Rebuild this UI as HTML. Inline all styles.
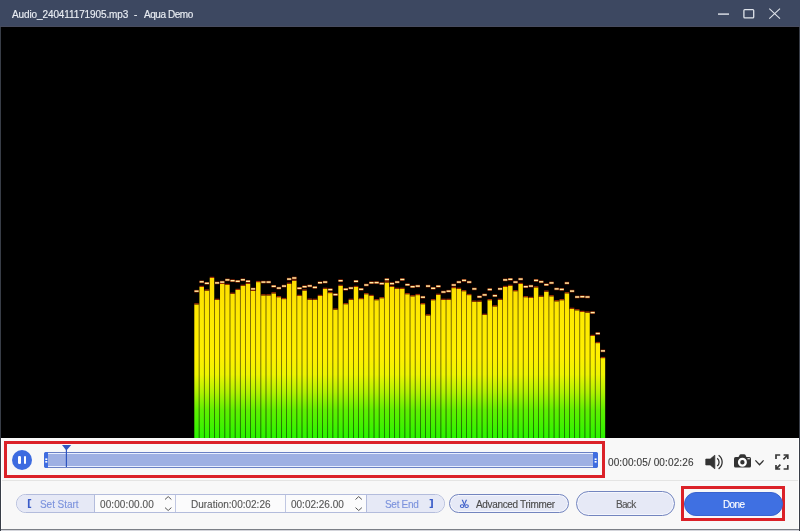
<!DOCTYPE html>
<html><head><meta charset="utf-8">
<style>
*{box-sizing:border-box;margin:0;padding:0}
html,body{width:800px;height:531px;overflow:hidden;background:#f8f8f8;font-family:"Liberation Sans",sans-serif}
.abs{position:absolute}
#title{left:0;top:0;width:800px;height:27px;background:#3d4861;border-bottom:1px solid #484c5f}
.ttl{top:8px;font-size:10px;color:#e9edf3;white-space:pre;line-height:14px;will-change:transform;-webkit-text-stroke:0.15px currentColor}
#video{left:1px;top:27px;width:798px;height:411px;background:#000}
#panel{left:1px;top:438px;width:798px;height:91px;background:#f8f8f8;border-left:1px solid #fff;border-right:1px solid #fff}
#lb{left:0;top:27px;width:1px;height:504px;background:#383d47}
#rb{left:799px;top:27px;width:1px;height:504px;background:#383d47}
#bb1{left:1px;top:529px;width:798px;height:1px;background:#7b7f86}
#bb2{left:1px;top:530px;width:798px;height:1px;background:#d4d5db}
#sep{left:2px;top:480px;width:796px;height:1px;background:#e4e4e3}
#redbox{left:4px;top:441px;width:601px;height:37px;border:3px solid #db2128}
#pause{left:12px;top:450px;width:20px;height:20px;border-radius:50%;background:#3d6be0}
#pause i{position:absolute;top:6px;width:2.6px;height:8px;background:#fff;border-radius:1.3px}
#track{left:43.5px;top:452px;width:554px;height:16px;border-radius:2px;background:#9fb0e3;border:1px solid #6a80c4;box-shadow:inset 0 0 0 1px #e8eeff}
.handle{top:452px;width:4.5px;height:16px;background:#3f6ce0}
.txt{font-size:10px;white-space:pre;line-height:12px;will-change:transform;-webkit-text-stroke:0.12px currentColor}
#time{left:608px;top:456.5px;color:#3c3c3c}
.btn{border-radius:12px}
</style></head><body>
<div id="title" class="abs"></div>
<div class="abs ttl" style="left:12px;letter-spacing:-0.11px">Audio_240411171905.mp3</div>
<div class="abs ttl" style="left:134px">-</div>
<div class="abs ttl" style="left:144.4px;letter-spacing:-0.45px">Aqua Demo</div>
<svg class="abs" style="left:0;top:0" width="800" height="27">
  <rect x="718" y="13.4" width="11" height="1.4" fill="#dfe3ea"/>
  <rect x="743.9" y="9.6" width="9.8" height="8.2" rx="0.9" fill="none" stroke="#dfe3ea" stroke-width="1.3"/>
  <path d="M769.3 8.6 L780 18.7 M780 8.6 L769.3 18.7" stroke="#dfe3ea" stroke-width="1.1" fill="none"/>
</svg>
<div id="video" class="abs"></div>
<svg class="abs" style="left:0;top:0" width="800" height="531">
  <defs>
    <linearGradient id="g" x1="0" y1="275" x2="0" y2="438" gradientUnits="userSpaceOnUse">
      <stop offset="0" stop-color="#ffdc00"/>
      <stop offset="0.25" stop-color="#ffea00"/>
      <stop offset="0.5" stop-color="#fff000"/>
      <stop offset="0.61" stop-color="#eef400"/>
      <stop offset="0.72" stop-color="#b0f200"/>
      <stop offset="0.83" stop-color="#5ef000"/>
      <stop offset="1" stop-color="#2af400"/>
    </linearGradient>
    <linearGradient id="gs" x1="0" y1="275" x2="0" y2="438" gradientUnits="userSpaceOnUse">
      <stop offset="0" stop-color="#704000"/>
      <stop offset="0.52" stop-color="#706000"/>
      <stop offset="0.7" stop-color="#507000"/>
      <stop offset="1" stop-color="#106800"/>
    </linearGradient>
  </defs>
  <g fill="url(#gs)">
<rect x="198.80" y="304.4" width="0.644" height="133.6"/>
<rect x="203.94" y="290.6" width="0.644" height="147.4"/>
<rect x="209.09" y="290.6" width="0.644" height="147.4"/>
<rect x="214.23" y="299.9" width="0.644" height="138.1"/>
<rect x="219.38" y="299.9" width="0.644" height="138.1"/>
<rect x="224.52" y="285.0" width="0.644" height="153.0"/>
<rect x="229.66" y="293.8" width="0.644" height="144.2"/>
<rect x="234.81" y="293.8" width="0.644" height="144.2"/>
<rect x="239.95" y="290.0" width="0.644" height="148.0"/>
<rect x="245.10" y="285.9" width="0.644" height="152.1"/>
<rect x="250.24" y="290.8" width="0.644" height="147.2"/>
<rect x="255.38" y="290.8" width="0.644" height="147.2"/>
<rect x="260.53" y="295.4" width="0.644" height="142.6"/>
<rect x="265.67" y="295.4" width="0.644" height="142.6"/>
<rect x="270.82" y="295.4" width="0.644" height="142.6"/>
<rect x="275.96" y="297.2" width="0.644" height="140.8"/>
<rect x="281.10" y="299.1" width="0.644" height="138.9"/>
<rect x="286.25" y="299.1" width="0.644" height="138.9"/>
<rect x="291.39" y="283.8" width="0.644" height="154.2"/>
<rect x="296.54" y="296.0" width="0.644" height="142.0"/>
<rect x="301.68" y="296.0" width="0.644" height="142.0"/>
<rect x="306.82" y="299.7" width="0.644" height="138.3"/>
<rect x="311.97" y="299.9" width="0.644" height="138.1"/>
<rect x="317.11" y="299.9" width="0.644" height="138.1"/>
<rect x="322.26" y="296.0" width="0.644" height="142.0"/>
<rect x="327.40" y="293.1" width="0.644" height="144.9"/>
<rect x="332.54" y="309.6" width="0.644" height="128.4"/>
<rect x="337.69" y="309.6" width="0.644" height="128.4"/>
<rect x="342.83" y="304.2" width="0.644" height="133.8"/>
<rect x="347.98" y="304.2" width="0.644" height="133.8"/>
<rect x="353.12" y="299.9" width="0.644" height="138.1"/>
<rect x="358.26" y="299.1" width="0.644" height="138.9"/>
<rect x="363.41" y="299.1" width="0.644" height="138.9"/>
<rect x="368.55" y="296.0" width="0.644" height="142.0"/>
<rect x="373.70" y="300.2" width="0.644" height="137.8"/>
<rect x="378.84" y="300.2" width="0.644" height="137.8"/>
<rect x="383.98" y="298.2" width="0.644" height="139.8"/>
<rect x="389.13" y="287.0" width="0.644" height="151.0"/>
<rect x="394.27" y="288.9" width="0.644" height="149.1"/>
<rect x="399.42" y="288.9" width="0.644" height="149.1"/>
<rect x="404.56" y="294.2" width="0.644" height="143.8"/>
<rect x="409.70" y="296.3" width="0.644" height="141.7"/>
<rect x="414.85" y="296.3" width="0.644" height="141.7"/>
<rect x="419.99" y="304.2" width="0.644" height="133.8"/>
<rect x="425.14" y="315.4" width="0.644" height="122.6"/>
<rect x="430.28" y="315.4" width="0.644" height="122.6"/>
<rect x="435.42" y="300.2" width="0.644" height="137.8"/>
<rect x="440.57" y="299.9" width="0.644" height="138.1"/>
<rect x="445.71" y="299.9" width="0.644" height="138.1"/>
<rect x="450.86" y="299.9" width="0.644" height="138.1"/>
<rect x="456.00" y="288.9" width="0.644" height="149.1"/>
<rect x="461.14" y="291.2" width="0.644" height="146.8"/>
<rect x="466.29" y="295.1" width="0.644" height="142.9"/>
<rect x="471.43" y="301.7" width="0.644" height="136.3"/>
<rect x="476.58" y="301.7" width="0.644" height="136.3"/>
<rect x="481.72" y="314.9" width="0.644" height="123.1"/>
<rect x="486.86" y="314.9" width="0.644" height="123.1"/>
<rect x="492.01" y="306.4" width="0.644" height="131.6"/>
<rect x="497.15" y="306.4" width="0.644" height="131.6"/>
<rect x="502.30" y="299.9" width="0.644" height="138.1"/>
<rect x="507.44" y="287.0" width="0.644" height="151.0"/>
<rect x="512.58" y="291.2" width="0.644" height="146.8"/>
<rect x="517.73" y="291.2" width="0.644" height="146.8"/>
<rect x="522.87" y="297.2" width="0.644" height="140.8"/>
<rect x="528.02" y="298.0" width="0.644" height="140.0"/>
<rect x="533.16" y="298.0" width="0.644" height="140.0"/>
<rect x="538.30" y="296.8" width="0.644" height="141.2"/>
<rect x="543.45" y="296.8" width="0.644" height="141.2"/>
<rect x="548.59" y="296.3" width="0.644" height="141.7"/>
<rect x="553.74" y="301.3" width="0.644" height="136.7"/>
<rect x="558.88" y="301.3" width="0.644" height="136.7"/>
<rect x="564.02" y="300.2" width="0.644" height="137.8"/>
<rect x="569.17" y="308.9" width="0.644" height="129.1"/>
<rect x="574.31" y="310.3" width="0.644" height="127.7"/>
<rect x="579.46" y="312.0" width="0.644" height="126.0"/>
<rect x="584.60" y="312.6" width="0.644" height="125.4"/>
<rect x="589.74" y="336.0" width="0.644" height="102.0"/>
<rect x="594.89" y="343.1" width="0.644" height="94.9"/>
<rect x="600.03" y="358.1" width="0.644" height="79.9"/>
  </g>
  <g fill="url(#g)">
<rect x="194.30" y="304.4" width="4.5" height="133.6"/><rect x="194.30" y="303.2" width="4.5" height="1.2" fill="#a03000"/>
<rect x="199.44" y="287.0" width="4.5" height="151.0"/><rect x="199.44" y="285.8" width="4.5" height="1.2" fill="#a03000"/>
<rect x="204.59" y="290.6" width="4.5" height="147.4"/><rect x="204.59" y="289.4" width="4.5" height="1.2" fill="#a03000"/>
<rect x="209.73" y="278.0" width="4.5" height="160.0"/><rect x="209.73" y="276.8" width="4.5" height="1.2" fill="#a03000"/>
<rect x="214.88" y="299.9" width="4.5" height="138.1"/><rect x="214.88" y="298.7" width="4.5" height="1.2" fill="#a03000"/>
<rect x="220.02" y="284.0" width="4.5" height="154.0"/><rect x="220.02" y="282.8" width="4.5" height="1.2" fill="#a03000"/>
<rect x="225.16" y="285.0" width="4.5" height="153.0"/><rect x="225.16" y="283.8" width="4.5" height="1.2" fill="#a03000"/>
<rect x="230.31" y="293.8" width="4.5" height="144.2"/><rect x="230.31" y="292.6" width="4.5" height="1.2" fill="#a03000"/>
<rect x="235.45" y="290.0" width="4.5" height="148.0"/><rect x="235.45" y="288.8" width="4.5" height="1.2" fill="#a03000"/>
<rect x="240.60" y="285.9" width="4.5" height="152.1"/><rect x="240.60" y="284.7" width="4.5" height="1.2" fill="#a03000"/>
<rect x="245.74" y="284.0" width="4.5" height="154.0"/><rect x="245.74" y="282.8" width="4.5" height="1.2" fill="#a03000"/>
<rect x="250.88" y="290.8" width="4.5" height="147.2"/><rect x="250.88" y="289.6" width="4.5" height="1.2" fill="#a03000"/>
<rect x="256.03" y="282.1" width="4.5" height="155.9"/><rect x="256.03" y="280.9" width="4.5" height="1.2" fill="#a03000"/>
<rect x="261.17" y="295.4" width="4.5" height="142.6"/><rect x="261.17" y="294.2" width="4.5" height="1.2" fill="#a03000"/>
<rect x="266.32" y="295.4" width="4.5" height="142.6"/><rect x="266.32" y="294.2" width="4.5" height="1.2" fill="#a03000"/>
<rect x="271.46" y="293.4" width="4.5" height="144.6"/><rect x="271.46" y="292.2" width="4.5" height="1.2" fill="#a03000"/>
<rect x="276.60" y="297.2" width="4.5" height="140.8"/><rect x="276.60" y="296.0" width="4.5" height="1.2" fill="#a03000"/>
<rect x="281.75" y="299.1" width="4.5" height="138.9"/><rect x="281.75" y="297.9" width="4.5" height="1.2" fill="#a03000"/>
<rect x="286.89" y="283.8" width="4.5" height="154.2"/><rect x="286.89" y="282.6" width="4.5" height="1.2" fill="#a03000"/>
<rect x="292.04" y="280.7" width="4.5" height="157.3"/><rect x="292.04" y="279.5" width="4.5" height="1.2" fill="#a03000"/>
<rect x="297.18" y="296.0" width="4.5" height="142.0"/><rect x="297.18" y="294.8" width="4.5" height="1.2" fill="#a03000"/>
<rect x="302.32" y="290.6" width="4.5" height="147.4"/><rect x="302.32" y="289.4" width="4.5" height="1.2" fill="#a03000"/>
<rect x="307.47" y="299.7" width="4.5" height="138.3"/><rect x="307.47" y="298.5" width="4.5" height="1.2" fill="#a03000"/>
<rect x="312.61" y="299.9" width="4.5" height="138.1"/><rect x="312.61" y="298.7" width="4.5" height="1.2" fill="#a03000"/>
<rect x="317.76" y="296.0" width="4.5" height="142.0"/><rect x="317.76" y="294.8" width="4.5" height="1.2" fill="#a03000"/>
<rect x="322.90" y="288.9" width="4.5" height="149.1"/><rect x="322.90" y="287.7" width="4.5" height="1.2" fill="#a03000"/>
<rect x="328.04" y="293.1" width="4.5" height="144.9"/><rect x="328.04" y="291.9" width="4.5" height="1.2" fill="#a03000"/>
<rect x="333.19" y="309.6" width="4.5" height="128.4"/><rect x="333.19" y="308.4" width="4.5" height="1.2" fill="#a03000"/>
<rect x="338.33" y="285.9" width="4.5" height="152.1"/><rect x="338.33" y="284.7" width="4.5" height="1.2" fill="#a03000"/>
<rect x="343.48" y="304.2" width="4.5" height="133.8"/><rect x="343.48" y="303.0" width="4.5" height="1.2" fill="#a03000"/>
<rect x="348.62" y="299.9" width="4.5" height="138.1"/><rect x="348.62" y="298.7" width="4.5" height="1.2" fill="#a03000"/>
<rect x="353.76" y="287.0" width="4.5" height="151.0"/><rect x="353.76" y="285.8" width="4.5" height="1.2" fill="#a03000"/>
<rect x="358.91" y="299.1" width="4.5" height="138.9"/><rect x="358.91" y="297.9" width="4.5" height="1.2" fill="#a03000"/>
<rect x="364.05" y="294.2" width="4.5" height="143.8"/><rect x="364.05" y="293.0" width="4.5" height="1.2" fill="#a03000"/>
<rect x="369.20" y="296.0" width="4.5" height="142.0"/><rect x="369.20" y="294.8" width="4.5" height="1.2" fill="#a03000"/>
<rect x="374.34" y="300.2" width="4.5" height="137.8"/><rect x="374.34" y="299.0" width="4.5" height="1.2" fill="#a03000"/>
<rect x="379.48" y="298.2" width="4.5" height="139.8"/><rect x="379.48" y="297.0" width="4.5" height="1.2" fill="#a03000"/>
<rect x="384.63" y="282.5" width="4.5" height="155.5"/><rect x="384.63" y="281.3" width="4.5" height="1.2" fill="#a03000"/>
<rect x="389.77" y="287.0" width="4.5" height="151.0"/><rect x="389.77" y="285.8" width="4.5" height="1.2" fill="#a03000"/>
<rect x="394.92" y="288.9" width="4.5" height="149.1"/><rect x="394.92" y="287.7" width="4.5" height="1.2" fill="#a03000"/>
<rect x="400.06" y="288.9" width="4.5" height="149.1"/><rect x="400.06" y="287.7" width="4.5" height="1.2" fill="#a03000"/>
<rect x="405.20" y="294.2" width="4.5" height="143.8"/><rect x="405.20" y="293.0" width="4.5" height="1.2" fill="#a03000"/>
<rect x="410.35" y="296.3" width="4.5" height="141.7"/><rect x="410.35" y="295.1" width="4.5" height="1.2" fill="#a03000"/>
<rect x="415.49" y="295.1" width="4.5" height="142.9"/><rect x="415.49" y="293.9" width="4.5" height="1.2" fill="#a03000"/>
<rect x="420.64" y="304.2" width="4.5" height="133.8"/><rect x="420.64" y="303.0" width="4.5" height="1.2" fill="#a03000"/>
<rect x="425.78" y="315.4" width="4.5" height="122.6"/><rect x="425.78" y="314.2" width="4.5" height="1.2" fill="#a03000"/>
<rect x="430.92" y="300.2" width="4.5" height="137.8"/><rect x="430.92" y="299.0" width="4.5" height="1.2" fill="#a03000"/>
<rect x="436.07" y="294.9" width="4.5" height="143.1"/><rect x="436.07" y="293.7" width="4.5" height="1.2" fill="#a03000"/>
<rect x="441.21" y="299.9" width="4.5" height="138.1"/><rect x="441.21" y="298.7" width="4.5" height="1.2" fill="#a03000"/>
<rect x="446.36" y="299.9" width="4.5" height="138.1"/><rect x="446.36" y="298.7" width="4.5" height="1.2" fill="#a03000"/>
<rect x="451.50" y="288.1" width="4.5" height="149.9"/><rect x="451.50" y="286.9" width="4.5" height="1.2" fill="#a03000"/>
<rect x="456.64" y="288.9" width="4.5" height="149.1"/><rect x="456.64" y="287.7" width="4.5" height="1.2" fill="#a03000"/>
<rect x="461.79" y="291.2" width="4.5" height="146.8"/><rect x="461.79" y="290.0" width="4.5" height="1.2" fill="#a03000"/>
<rect x="466.93" y="295.1" width="4.5" height="142.9"/><rect x="466.93" y="293.9" width="4.5" height="1.2" fill="#a03000"/>
<rect x="472.08" y="301.7" width="4.5" height="136.3"/><rect x="472.08" y="300.5" width="4.5" height="1.2" fill="#a03000"/>
<rect x="477.22" y="301.7" width="4.5" height="136.3"/><rect x="477.22" y="300.5" width="4.5" height="1.2" fill="#a03000"/>
<rect x="482.36" y="314.9" width="4.5" height="123.1"/><rect x="482.36" y="313.7" width="4.5" height="1.2" fill="#a03000"/>
<rect x="487.51" y="300.2" width="4.5" height="137.8"/><rect x="487.51" y="299.0" width="4.5" height="1.2" fill="#a03000"/>
<rect x="492.65" y="306.4" width="4.5" height="131.6"/><rect x="492.65" y="305.2" width="4.5" height="1.2" fill="#a03000"/>
<rect x="497.80" y="299.9" width="4.5" height="138.1"/><rect x="497.80" y="298.7" width="4.5" height="1.2" fill="#a03000"/>
<rect x="502.94" y="287.0" width="4.5" height="151.0"/><rect x="502.94" y="285.8" width="4.5" height="1.2" fill="#a03000"/>
<rect x="508.08" y="285.9" width="4.5" height="152.1"/><rect x="508.08" y="284.7" width="4.5" height="1.2" fill="#a03000"/>
<rect x="513.23" y="291.2" width="4.5" height="146.8"/><rect x="513.23" y="290.0" width="4.5" height="1.2" fill="#a03000"/>
<rect x="518.37" y="284.0" width="4.5" height="154.0"/><rect x="518.37" y="282.8" width="4.5" height="1.2" fill="#a03000"/>
<rect x="523.52" y="297.2" width="4.5" height="140.8"/><rect x="523.52" y="296.0" width="4.5" height="1.2" fill="#a03000"/>
<rect x="528.66" y="298.0" width="4.5" height="140.0"/><rect x="528.66" y="296.8" width="4.5" height="1.2" fill="#a03000"/>
<rect x="533.80" y="287.4" width="4.5" height="150.6"/><rect x="533.80" y="286.2" width="4.5" height="1.2" fill="#a03000"/>
<rect x="538.95" y="296.8" width="4.5" height="141.2"/><rect x="538.95" y="295.6" width="4.5" height="1.2" fill="#a03000"/>
<rect x="544.09" y="291.7" width="4.5" height="146.3"/><rect x="544.09" y="290.5" width="4.5" height="1.2" fill="#a03000"/>
<rect x="549.24" y="296.3" width="4.5" height="141.7"/><rect x="549.24" y="295.1" width="4.5" height="1.2" fill="#a03000"/>
<rect x="554.38" y="301.3" width="4.5" height="136.7"/><rect x="554.38" y="300.1" width="4.5" height="1.2" fill="#a03000"/>
<rect x="559.52" y="300.2" width="4.5" height="137.8"/><rect x="559.52" y="299.0" width="4.5" height="1.2" fill="#a03000"/>
<rect x="564.67" y="293.3" width="4.5" height="144.7"/><rect x="564.67" y="292.1" width="4.5" height="1.2" fill="#a03000"/>
<rect x="569.81" y="308.9" width="4.5" height="129.1"/><rect x="569.81" y="307.7" width="4.5" height="1.2" fill="#a03000"/>
<rect x="574.96" y="310.3" width="4.5" height="127.7"/><rect x="574.96" y="309.1" width="4.5" height="1.2" fill="#a03000"/>
<rect x="580.10" y="312.0" width="4.5" height="126.0"/><rect x="580.10" y="310.8" width="4.5" height="1.2" fill="#a03000"/>
<rect x="585.24" y="312.6" width="4.5" height="125.4"/><rect x="585.24" y="311.4" width="4.5" height="1.2" fill="#a03000"/>
<rect x="590.39" y="336.0" width="4.5" height="102.0"/><rect x="590.39" y="334.8" width="4.5" height="1.2" fill="#a03000"/>
<rect x="595.53" y="343.1" width="4.5" height="94.9"/><rect x="595.53" y="341.9" width="4.5" height="1.2" fill="#a03000"/>
<rect x="600.68" y="358.1" width="4.5" height="79.9"/><rect x="600.68" y="356.9" width="4.5" height="1.2" fill="#a03000"/>
  </g>
  <g>
<rect x="194.30" y="289.9" width="4.5" height="2.6" fill="#962800"/><rect x="194.50" y="290.5" width="4.10" height="1.4" fill="#fff0a8"/>
<rect x="199.44" y="280.5" width="4.5" height="2.6" fill="#962800"/><rect x="199.64" y="281.1" width="4.10" height="1.4" fill="#fff0a8"/>
<rect x="204.59" y="282.0" width="4.5" height="2.6" fill="#962800"/><rect x="204.79" y="282.6" width="4.10" height="1.4" fill="#fff0a8"/>
<rect x="214.88" y="281.6" width="4.5" height="2.6" fill="#962800"/><rect x="215.08" y="282.2" width="4.10" height="1.4" fill="#fff0a8"/>
<rect x="220.02" y="280.8" width="4.5" height="2.6" fill="#962800"/><rect x="220.22" y="281.4" width="4.10" height="1.4" fill="#fff0a8"/>
<rect x="225.16" y="278.6" width="4.5" height="2.6" fill="#962800"/><rect x="225.36" y="279.2" width="4.10" height="1.4" fill="#fff0a8"/>
<rect x="230.31" y="279.4" width="4.5" height="2.6" fill="#962800"/><rect x="230.51" y="280.0" width="4.10" height="1.4" fill="#fff0a8"/>
<rect x="235.45" y="280.0" width="4.5" height="2.6" fill="#962800"/><rect x="235.65" y="280.6" width="4.10" height="1.4" fill="#fff0a8"/>
<rect x="240.60" y="278.5" width="4.5" height="2.6" fill="#962800"/><rect x="240.80" y="279.1" width="4.10" height="1.4" fill="#fff0a8"/>
<rect x="245.74" y="280.0" width="4.5" height="2.6" fill="#962800"/><rect x="245.94" y="280.6" width="4.10" height="1.4" fill="#fff0a8"/>
<rect x="250.88" y="287.6" width="4.5" height="2.6" fill="#962800"/><rect x="251.08" y="288.2" width="4.10" height="1.4" fill="#fff0a8"/>
<rect x="261.17" y="280.8" width="4.5" height="2.6" fill="#962800"/><rect x="261.37" y="281.4" width="4.10" height="1.4" fill="#fff0a8"/>
<rect x="266.32" y="280.8" width="4.5" height="2.6" fill="#962800"/><rect x="266.52" y="281.4" width="4.10" height="1.4" fill="#fff0a8"/>
<rect x="271.46" y="285.0" width="4.5" height="2.6" fill="#962800"/><rect x="271.66" y="285.6" width="4.10" height="1.4" fill="#fff0a8"/>
<rect x="276.60" y="286.8" width="4.5" height="2.6" fill="#962800"/><rect x="276.80" y="287.4" width="4.10" height="1.4" fill="#fff0a8"/>
<rect x="281.75" y="284.8" width="4.5" height="2.6" fill="#962800"/><rect x="281.95" y="285.4" width="4.10" height="1.4" fill="#fff0a8"/>
<rect x="286.89" y="277.8" width="4.5" height="2.6" fill="#962800"/><rect x="287.09" y="278.4" width="4.10" height="1.4" fill="#fff0a8"/>
<rect x="292.04" y="276.7" width="4.5" height="2.6" fill="#962800"/><rect x="292.24" y="277.3" width="4.10" height="1.4" fill="#fff0a8"/>
<rect x="297.18" y="287.0" width="4.5" height="2.6" fill="#962800"/><rect x="297.38" y="287.6" width="4.10" height="1.4" fill="#fff0a8"/>
<rect x="302.32" y="285.4" width="4.5" height="2.6" fill="#962800"/><rect x="302.52" y="286.0" width="4.10" height="1.4" fill="#fff0a8"/>
<rect x="307.47" y="284.6" width="4.5" height="2.6" fill="#962800"/><rect x="307.67" y="285.2" width="4.10" height="1.4" fill="#fff0a8"/>
<rect x="312.61" y="286.1" width="4.5" height="2.6" fill="#962800"/><rect x="312.81" y="286.7" width="4.10" height="1.4" fill="#fff0a8"/>
<rect x="317.76" y="281.4" width="4.5" height="2.6" fill="#962800"/><rect x="317.96" y="282.0" width="4.10" height="1.4" fill="#fff0a8"/>
<rect x="322.90" y="280.8" width="4.5" height="2.6" fill="#962800"/><rect x="323.10" y="281.4" width="4.10" height="1.4" fill="#fff0a8"/>
<rect x="328.04" y="288.3" width="4.5" height="2.6" fill="#962800"/><rect x="328.24" y="288.9" width="4.10" height="1.4" fill="#fff0a8"/>
<rect x="333.19" y="293.3" width="4.5" height="2.6" fill="#962800"/><rect x="333.39" y="293.9" width="4.10" height="1.4" fill="#fff0a8"/>
<rect x="338.33" y="279.4" width="4.5" height="2.6" fill="#962800"/><rect x="338.53" y="280.0" width="4.10" height="1.4" fill="#fff0a8"/>
<rect x="343.48" y="288.0" width="4.5" height="2.6" fill="#962800"/><rect x="343.68" y="288.6" width="4.10" height="1.4" fill="#fff0a8"/>
<rect x="348.62" y="286.8" width="4.5" height="2.6" fill="#962800"/><rect x="348.82" y="287.4" width="4.10" height="1.4" fill="#fff0a8"/>
<rect x="353.76" y="280.0" width="4.5" height="2.6" fill="#962800"/><rect x="353.96" y="280.6" width="4.10" height="1.4" fill="#fff0a8"/>
<rect x="358.91" y="288.0" width="4.5" height="2.6" fill="#962800"/><rect x="359.11" y="288.6" width="4.10" height="1.4" fill="#fff0a8"/>
<rect x="364.05" y="283.7" width="4.5" height="2.6" fill="#962800"/><rect x="364.25" y="284.3" width="4.10" height="1.4" fill="#fff0a8"/>
<rect x="369.20" y="281.4" width="4.5" height="2.6" fill="#962800"/><rect x="369.40" y="282.0" width="4.10" height="1.4" fill="#fff0a8"/>
<rect x="374.34" y="281.3" width="4.5" height="2.6" fill="#962800"/><rect x="374.54" y="281.9" width="4.10" height="1.4" fill="#fff0a8"/>
<rect x="379.48" y="282.3" width="4.5" height="2.6" fill="#962800"/><rect x="379.68" y="282.9" width="4.10" height="1.4" fill="#fff0a8"/>
<rect x="384.63" y="278.2" width="4.5" height="2.6" fill="#962800"/><rect x="384.83" y="278.8" width="4.10" height="1.4" fill="#fff0a8"/>
<rect x="389.77" y="282.3" width="4.5" height="2.6" fill="#962800"/><rect x="389.97" y="282.9" width="4.10" height="1.4" fill="#fff0a8"/>
<rect x="394.92" y="280.8" width="4.5" height="2.6" fill="#962800"/><rect x="395.12" y="281.4" width="4.10" height="1.4" fill="#fff0a8"/>
<rect x="400.06" y="278.2" width="4.5" height="2.6" fill="#962800"/><rect x="400.26" y="278.8" width="4.10" height="1.4" fill="#fff0a8"/>
<rect x="405.20" y="283.4" width="4.5" height="2.6" fill="#962800"/><rect x="405.40" y="284.0" width="4.10" height="1.4" fill="#fff0a8"/>
<rect x="410.35" y="285.4" width="4.5" height="2.6" fill="#962800"/><rect x="410.55" y="286.0" width="4.10" height="1.4" fill="#fff0a8"/>
<rect x="415.49" y="284.8" width="4.5" height="2.6" fill="#962800"/><rect x="415.69" y="285.4" width="4.10" height="1.4" fill="#fff0a8"/>
<rect x="420.64" y="295.9" width="4.5" height="2.6" fill="#962800"/><rect x="420.84" y="296.5" width="4.10" height="1.4" fill="#fff0a8"/>
<rect x="425.78" y="284.8" width="4.5" height="2.6" fill="#962800"/><rect x="425.98" y="285.4" width="4.10" height="1.4" fill="#fff0a8"/>
<rect x="430.92" y="287.0" width="4.5" height="2.6" fill="#962800"/><rect x="431.12" y="287.6" width="4.10" height="1.4" fill="#fff0a8"/>
<rect x="436.07" y="285.0" width="4.5" height="2.6" fill="#962800"/><rect x="436.27" y="285.6" width="4.10" height="1.4" fill="#fff0a8"/>
<rect x="441.21" y="290.7" width="4.5" height="2.6" fill="#962800"/><rect x="441.41" y="291.3" width="4.10" height="1.4" fill="#fff0a8"/>
<rect x="446.36" y="289.9" width="4.5" height="2.6" fill="#962800"/><rect x="446.56" y="290.5" width="4.10" height="1.4" fill="#fff0a8"/>
<rect x="451.50" y="283.7" width="4.5" height="2.6" fill="#962800"/><rect x="451.70" y="284.3" width="4.10" height="1.4" fill="#fff0a8"/>
<rect x="456.64" y="280.8" width="4.5" height="2.6" fill="#962800"/><rect x="456.84" y="281.4" width="4.10" height="1.4" fill="#fff0a8"/>
<rect x="461.79" y="279.1" width="4.5" height="2.6" fill="#962800"/><rect x="461.99" y="279.7" width="4.10" height="1.4" fill="#fff0a8"/>
<rect x="466.93" y="280.8" width="4.5" height="2.6" fill="#962800"/><rect x="467.13" y="281.4" width="4.10" height="1.4" fill="#fff0a8"/>
<rect x="472.08" y="287.6" width="4.5" height="2.6" fill="#962800"/><rect x="472.28" y="288.2" width="4.10" height="1.4" fill="#fff0a8"/>
<rect x="477.22" y="295.5" width="4.5" height="2.6" fill="#962800"/><rect x="477.42" y="296.1" width="4.10" height="1.4" fill="#fff0a8"/>
<rect x="482.36" y="293.6" width="4.5" height="2.6" fill="#962800"/><rect x="482.56" y="294.2" width="4.10" height="1.4" fill="#fff0a8"/>
<rect x="487.51" y="288.2" width="4.5" height="2.6" fill="#962800"/><rect x="487.71" y="288.8" width="4.10" height="1.4" fill="#fff0a8"/>
<rect x="492.65" y="294.4" width="4.5" height="2.6" fill="#962800"/><rect x="492.85" y="295.0" width="4.10" height="1.4" fill="#fff0a8"/>
<rect x="497.80" y="287.6" width="4.5" height="2.6" fill="#962800"/><rect x="498.00" y="288.2" width="4.10" height="1.4" fill="#fff0a8"/>
<rect x="502.94" y="278.6" width="4.5" height="2.6" fill="#962800"/><rect x="503.14" y="279.2" width="4.10" height="1.4" fill="#fff0a8"/>
<rect x="508.08" y="278.0" width="4.5" height="2.6" fill="#962800"/><rect x="508.28" y="278.6" width="4.10" height="1.4" fill="#fff0a8"/>
<rect x="513.23" y="280.8" width="4.5" height="2.6" fill="#962800"/><rect x="513.43" y="281.4" width="4.10" height="1.4" fill="#fff0a8"/>
<rect x="518.37" y="277.8" width="4.5" height="2.6" fill="#962800"/><rect x="518.57" y="278.4" width="4.10" height="1.4" fill="#fff0a8"/>
<rect x="523.52" y="285.4" width="4.5" height="2.6" fill="#962800"/><rect x="523.72" y="286.0" width="4.10" height="1.4" fill="#fff0a8"/>
<rect x="528.66" y="284.8" width="4.5" height="2.6" fill="#962800"/><rect x="528.86" y="285.4" width="4.10" height="1.4" fill="#fff0a8"/>
<rect x="533.80" y="279.1" width="4.5" height="2.6" fill="#962800"/><rect x="534.00" y="279.7" width="4.10" height="1.4" fill="#fff0a8"/>
<rect x="538.95" y="280.5" width="4.5" height="2.6" fill="#962800"/><rect x="539.15" y="281.1" width="4.10" height="1.4" fill="#fff0a8"/>
<rect x="544.09" y="283.4" width="4.5" height="2.6" fill="#962800"/><rect x="544.29" y="284.0" width="4.10" height="1.4" fill="#fff0a8"/>
<rect x="549.24" y="281.6" width="4.5" height="2.6" fill="#962800"/><rect x="549.44" y="282.2" width="4.10" height="1.4" fill="#fff0a8"/>
<rect x="554.38" y="287.6" width="4.5" height="2.6" fill="#962800"/><rect x="554.58" y="288.2" width="4.10" height="1.4" fill="#fff0a8"/>
<rect x="559.52" y="288.1" width="4.5" height="2.6" fill="#962800"/><rect x="559.72" y="288.7" width="4.10" height="1.4" fill="#fff0a8"/>
<rect x="564.67" y="281.8" width="4.5" height="2.6" fill="#962800"/><rect x="564.87" y="282.4" width="4.10" height="1.4" fill="#fff0a8"/>
<rect x="569.81" y="289.8" width="4.5" height="2.6" fill="#962800"/><rect x="570.01" y="290.4" width="4.10" height="1.4" fill="#fff0a8"/>
<rect x="574.96" y="295.7" width="4.5" height="2.6" fill="#962800"/><rect x="575.16" y="296.3" width="4.10" height="1.4" fill="#fff0a8"/>
<rect x="580.10" y="295.4" width="4.5" height="2.6" fill="#962800"/><rect x="580.30" y="296.0" width="4.10" height="1.4" fill="#fff0a8"/>
<rect x="585.24" y="295.7" width="4.5" height="2.6" fill="#962800"/><rect x="585.44" y="296.3" width="4.10" height="1.4" fill="#fff0a8"/>
<rect x="590.39" y="311.3" width="4.5" height="2.6" fill="#962800"/><rect x="590.59" y="311.9" width="4.10" height="1.4" fill="#fff0a8"/>
<rect x="595.53" y="332.2" width="4.5" height="2.6" fill="#962800"/><rect x="595.73" y="332.8" width="4.10" height="1.4" fill="#fff0a8"/>
<rect x="600.68" y="349.6" width="4.5" height="2.6" fill="#962800"/><rect x="600.88" y="350.2" width="4.10" height="1.4" fill="#fff0a8"/>
  </g>
</svg>
<div id="panel" class="abs"></div>
<div id="lb" class="abs"></div>
<div id="rb" class="abs"></div>
<div id="bb1" class="abs"></div>
<div id="bb2" class="abs"></div>
<div id="sep" class="abs"></div>
<div id="redbox" class="abs"></div>
<div id="pause" class="abs"><i style="left:6px"></i><i style="left:11.6px"></i></div>
<div id="track" class="abs"></div>
<div class="abs handle" style="left:43.5px;border-radius:2px 0 0 2px"></div>
<div class="abs handle" style="left:593.3px;border-radius:0 2px 2px 0"></div>
<svg class="abs" style="left:0;top:440px" width="800" height="40">
  <rect x="45.3" y="18.4" width="2" height="1.6" fill="#fff"/>
  <rect x="45.3" y="21" width="2" height="1.6" fill="#fff"/>
  <rect x="594.6" y="18.4" width="2" height="1.6" fill="#fff"/>
  <rect x="594.6" y="21" width="2" height="1.6" fill="#fff"/>
  <rect x="65.8" y="9" width="1.2" height="18" fill="#2f55c0"/>
  <path d="M62 5 L71.2 5 L66.4 10.5 Z" fill="#2f55c0"/>
</svg>
<svg class="abs" style="left:700px;top:448px" width="100" height="26">
  <path d="M5.8 11.1 H10.2 L14.8 7.2 V20.8 L10.2 16.9 H5.8 Z" fill="#333" stroke="#333" stroke-width="0.8" stroke-linejoin="round"/>
  <path d="M17.2 10.3 A5 5 0 0 1 17.2 18.1" fill="none" stroke="#333" stroke-width="1.3"/>
  <path d="M18.6 7.3 A8.3 8.3 0 0 1 18.6 20.9" fill="none" stroke="#333" stroke-width="1.3"/>
  <path d="M38.4 9.2 L39.7 6.8 Q40.1 6.2 40.7 6.2 H44.3 Q44.9 6.2 45.3 6.8 L46.6 9.2 Z" fill="#333"/>
  <rect x="34" y="9" width="17" height="10.5" rx="1.6" fill="#333"/>
  <circle cx="42.4" cy="14.25" r="3.35" fill="none" stroke="#fff" stroke-width="2.3"/>
  <circle cx="42.4" cy="14.25" r="1.4" fill="#333"/>
  <rect x="47.3" y="10.2" width="2.7" height="1.1" rx="0.5" fill="#fff"/>
  <path d="M55.4 12.4 L59.5 16.8 L63.6 12.4" fill="none" stroke="#333" stroke-width="1.3"/>
  <path d="M76 11 V7 H80.2 M83.6 7 H87.8 V11 M87.8 7 L83.4 11.4 M76 17 V21 H80.2 M76 21 L80.4 16.6 M83.6 21 H87.8 V17" fill="none" stroke="#383838" stroke-width="1.7"/>
</svg>
<div id="time" class="abs txt" style="letter-spacing:0.12px">00:00:05/ 00:02:26</div>
<div class="abs" style="left:16px;top:493.5px;width:429px;height:19.6px;border:1px solid #b3bcdc;border-radius:10px;background:#fbfbfc;overflow:hidden">
  <div class="abs" style="left:0;top:0;width:78px;height:18px;background:#e6e9f6;border-right:1px solid #b3bcdc"></div>
  <div class="abs" style="left:158px;top:0;width:1px;height:18px;background:#c0c7e2"></div>
  <div class="abs" style="left:268px;top:0;width:1px;height:18px;background:#c0c7e2"></div>
  <div class="abs" style="left:349px;top:0;width:79px;height:18px;background:#e6e9f6;border-left:1px solid #b3bcdc"></div>
</div>
<svg class="abs" style="left:0;top:488px" width="800" height="36">
  <path d="M27.9 11 H31.2 V12.2 H29.6 V18.7 H31.2 V19.9 H27.9 Z" fill="#3a5cc8"/>
  <path d="M432.9 11 H429.6 V12.2 H431.2 V18.7 H429.6 V19.9 H432.9 Z" fill="#3a5cc8"/>
  <path d="M165 11.5 L168.2 8.6 L171.4 11.5 M165 19.6 L168.2 22.5 L171.4 19.6" fill="none" stroke="#555" stroke-width="1"/>
  <path d="M355.5 11.5 L358.7 8.6 L361.9 11.5 M355.5 19.6 L358.7 22.5 L361.9 19.6" fill="none" stroke="#555" stroke-width="1"/>
</svg>
<div class="abs txt" style="left:39.6px;top:499px;color:#7b92dc;letter-spacing:-0.05px">Set Start</div>
<div class="abs txt" style="left:100px;top:499px;color:#555;letter-spacing:0.1px">00:00:00.00</div>
<div class="abs txt" style="left:190.5px;top:499px;color:#555">Duration:00:02:26</div>
<div class="abs txt" style="left:291px;top:499px;color:#555">00:02:26.00</div>
<div class="abs txt" style="left:384.6px;top:499px;color:#7b92dc;letter-spacing:-0.3px">Set End</div>
<div class="abs" style="left:448.75px;top:493.75px;width:120px;height:19.6px;border:1px solid #7385bf;border-radius:10px;background:#e6e9f6;box-shadow:inset 0 0 0 1px #f4f6fd"></div>
<svg class="abs" style="left:455px;top:496px" width="18" height="16">
  <path d="M6.6 3.8 L7.9 3.8 L10 8.9 L9.3 9.4 Z" fill="#3a5cc8"/>
  <path d="M12.1 3.8 L10.8 3.8 L8.7 8.9 L9.4 9.4 Z" fill="#3a5cc8"/>
  <ellipse cx="7.1" cy="10.1" rx="1.75" ry="1.4" fill="#f2f5fc" stroke="#3a5cc8" stroke-width="1.05"/>
  <ellipse cx="11.6" cy="10.1" rx="1.75" ry="1.4" fill="#f2f5fc" stroke="#3a5cc8" stroke-width="1.05"/>
</svg>
<div class="abs txt" style="left:476.2px;top:499px;color:#4a4a4a;letter-spacing:-0.33px">Advanced Trimmer</div>
<div class="abs" style="left:576px;top:491px;width:99px;height:25px;border:1px solid #7385bf;border-radius:12.5px;background:#e6e9f6;box-shadow:inset 0 0 0 1px #f4f6fd"></div>
<div class="abs txt" style="left:615.6px;top:499px;color:#555;letter-spacing:-0.7px">Back</div>
<div class="abs" style="left:681.3px;top:486.3px;width:103.7px;height:34.5px;border:3px solid #db2128"></div>
<div class="abs" style="left:684px;top:491.8px;width:98.5px;height:23.8px;border-radius:12px;background:#3f70e2;border:1px solid #3963cf"></div>
<div class="abs txt" style="left:722.6px;top:499px;color:#fff;letter-spacing:-0.6px">Done</div>
</body></html>
